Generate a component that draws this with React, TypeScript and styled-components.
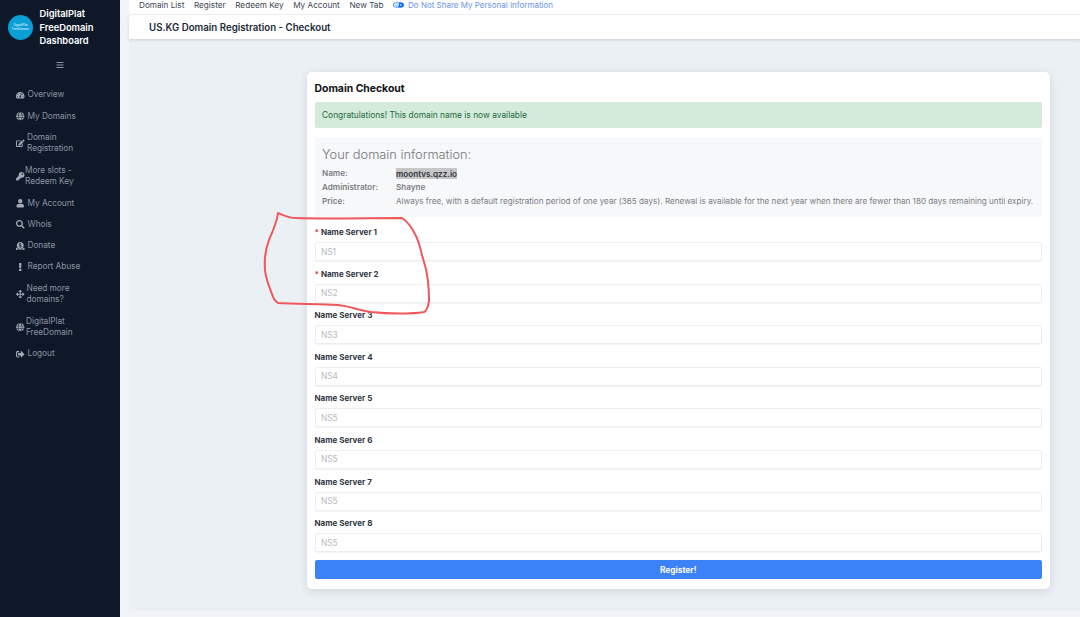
import React from 'react';
import styled, { createGlobalStyle } from 'styled-components';
import {
  FaArrowsAlt,
  FaBars,
  FaDonate,
  FaEdit,
  FaExclamation,
  FaGlobe,
  FaKey,
  FaSearch,
  FaSignOutAlt,
  FaTachometerAlt,
  FaUser,
} from 'react-icons/fa';

const GlobalStyle = createGlobalStyle`
  html, body { margin: 0; padding: 0; height: 617px; overflow: hidden; }
  body { font-family: Inter, "Open Sans", sans-serif; background: #f1f3f6; }
  * { box-sizing: border-box; }
`;

const Page = styled.div`
  position: relative;
  display: flex;
  width: 1080px;
  height: 617px;
  overflow: hidden;
`;

const Sidebar = styled.aside`
  width: 119.5px;
  flex: none;
  background: #0f1828;
  display: flex;
  flex-direction: column;
`;

const Brand = styled.div`
  display: flex;
  align-items: center;
  gap: 6.5px;
  height: 53px;
  padding: 0 0 0 8px;
  margin-top: 1px;
`;

const Logo = styled.div`
  width: 25px;
  height: 25px;
  border-radius: 50%;
  background: #0a9fd6;
  color: #e6f7ff;
  font-size: 3px;
  line-height: 3.6px;
  text-align: center;
  display: flex;
  align-items: center;
  justify-content: center;
  flex: none;
`;

const BrandName = styled.div`
  color: #fff;
  font-size: 9.3px;
  font-weight: 600;
  line-height: 13.6px;
`;

const Toggle = styled.div`
  display: flex;
  justify-content: center;
  height: 16px;
  padding-top: 6.5px;
  color: #8d95a3;
  font-size: 8px;
`;

const Menu = styled.nav`
  display: flex;
  flex-direction: column;
  margin-top: 14.5px;
`;

const MenuItem = styled.a<{ $indent: number }>`
  display: flex;
  align-items: center;
  gap: ${p => p.$indent}px;
  padding: 4.9px 8px 4.9px 16px;
  color: #8a93a3;
  font-size: 8.3px;
  letter-spacing: -0.05px;
  line-height: 11.5px;
  min-height: 21.3px;
  & > svg { flex: none; width: 8.5px; height: 8.5px; color: #a2aab6; }
`;

const Main = styled.div`
  flex: 1;
  min-width: 0;
  padding-left: 9.5px;
  display: flex;
  flex-direction: column;
  height: 611px;
`;

const TopNav = styled.div`
  display: flex;
  align-items: center;
  height: 15px;
  padding: 0 0 5px 10px;
  gap: 9.6px;
  background: #fff;
  font-size: 8.2px;
  color: #3d4654;
  border-bottom: 1px solid #f0f2f5;
`;

const PrivacyLink = styled.span`
  display: flex;
  align-items: center;
  gap: 4px;
  font-size: 8px;
  color: #6b93e6;
`;

const Header = styled.header`
  height: 24px;
  background: #fff;
  border-radius: 4px 0 0 0;
  box-shadow: 0 1px 3px rgba(40, 50, 70, 0.16);
  padding-left: 20px;
  display: flex;
  align-items: center;
  font-size: 9.7px;
  font-weight: 600;
  color: #222a38;
  position: relative;
`;

const Content = styled.main`
  flex: 1;
  background: #ebf0f5;
  padding: 32.5px 30px 0 178px;
`;

const Card = styled.section`
  background: #fff;
  border-radius: 5px;
  box-shadow: 0 2px 8px rgba(40, 50, 70, 0.14);
  padding: 8px 8px 8px 7.5px;
  height: 517.5px;
  display: flex;
  flex-direction: column;
`;

const CardTitle = styled.h2`
  margin: 0;
  height: 22.5px;
  padding-bottom: 4px;
  display: flex;
  align-items: center;
  font-size: 10.4px;
  font-weight: 700;
  color: #0f1216;
`;

const Alert = styled.div`
  height: 26px;
  display: flex;
  align-items: center;
  padding-left: 7.5px;
  background: #d4eadb;
  border-radius: 2px;
  color: #1f6b3d;
  font-size: 8.4px;
`;

const InfoBox = styled.div`
  margin-top: 10px;
  height: 79px;
  background: #f7f8fa;
  border-radius: 2px;
  padding: 8px 7.5px 0;
`;

const InfoTitle = styled.h3`
  margin: 0 0 2px;
  font-size: 12.8px;
  line-height: 18px;
  font-weight: 300;
  color: #6f757d;
`;

const InfoRow = styled.div`
  display: grid;
  grid-template-columns: 74px 1fr;
  height: 14px;
  align-items: center;
  font-size: 8.15px;
  color: #777d85;
`;

const InfoLabel = styled.span`
  font-weight: 600;
`;

const InfoValue = styled.span<{ $strong?: boolean }>`
  font-weight: ${p => (p.$strong ? 600 : 400)};
  white-space: nowrap;
`;

const Selected = styled.mark`
  background: #c6c6c6;
  color: #33383f;
  font-weight: 600;
  padding: 0.5px 0;
`;

const Fields = styled.div`
  margin-top: 9px;
  display: flex;
  flex-direction: column;
`;

const Field = styled.div`
  height: 41.6px;
  display: flex;
  flex-direction: column;
`;

const Label = styled.label`
  height: 12px;
  display: block;
  line-height: 12px;
  font-size: 8px;
  font-weight: 700;
  color: #303744;
`;

const Star = styled.span`
  color: #e0453a;
`;

const Input = styled.input`
  margin-top: 4px;
  height: 19px;
  width: 100%;
  border: 1px solid #eceef1;
  border-radius: 2px;
  box-shadow: 0 1px 1px rgba(40, 50, 70, 0.06);
  padding: 0 5.5px;
  background: #fff;
  font-family: inherit;
  font-size: 8.3px;
  &::placeholder { color: #b4b8bf; }
`;

const Register = styled.button`
  margin-top: 1px;
  height: 19.5px;
  width: 100%;
  border: none;
  border-radius: 2px;
  background: #3b82f6;
  color: #fff;
  font-family: inherit;
  font-size: 8.3px;
  font-weight: 700;
`;

const Scribble = styled.svg`
  position: absolute;
  inset: 0;
  width: 1080px;
  height: 617px;
  pointer-events: none;
`;

const menu = [
  { icon: <FaTachometerAlt />, text: 'Overview', indent: 3 },
  { icon: <FaGlobe />, text: 'My Domains', indent: 3 },
  { icon: <FaEdit />, text: <>Domain<br />Registration</>, indent: 2.5 },
  { icon: <FaKey />, text: <>More slots -<br />Redeem Key</>, indent: 0.5 },
  { icon: <FaUser />, text: 'My Account', indent: 3 },
  { icon: <FaSearch />, text: 'Whois', indent: 3 },
  { icon: <FaDonate />, text: 'Donate', indent: 3 },
  { icon: <FaExclamation />, text: 'Report Abuse', indent: 3 },
  { icon: <FaArrowsAlt />, text: <>Need more<br />domains?</>, indent: 2 },
  { icon: <FaGlobe />, text: <>DigitalPlat<br />FreeDomain</>, indent: 1.5 },
  { icon: <FaSignOutAlt />, text: 'Logout', indent: 3 },
];

const servers = [
  { n: 1, placeholder: 'NS1', required: true },
  { n: 2, placeholder: 'NS2', required: true },
  { n: 3, placeholder: 'NS3' },
  { n: 4, placeholder: 'NS4' },
  { n: 5, placeholder: 'NS5' },
  { n: 6, placeholder: 'NS5' },
  { n: 7, placeholder: 'NS5' },
  { n: 8, placeholder: 'NS5' },
];

export default function App() {
  return (
    <Page>
      <GlobalStyle />
      <Sidebar>
        <Brand>
          <Logo>DigitalPlat<br />FreeDomain</Logo>
          <BrandName>DigitalPlat<br />FreeDomain<br />Dashboard</BrandName>
        </Brand>
        <Toggle><FaBars /></Toggle>
        <Menu>
          {menu.map((m, i) => (
            <MenuItem key={i} $indent={m.indent}>
              {m.icon}
              <span>{m.text}</span>
            </MenuItem>
          ))}
        </Menu>
      </Sidebar>
      <Main>
        <TopNav>
          <span>Domain List</span>
          <span>Register</span>
          <span>Redeem Key</span>
          <span>My Account</span>
          <span>New Tab</span>
          <PrivacyLink>
            <svg width="11" height="6" viewBox="0 0 30 14">
              <rect x="1" y="1" width="28" height="12" rx="6" fill="#fff" stroke="#0066ff" strokeWidth="2" />
              <path d="M17 1h6a6 6 0 0 1 0 12h-9z" fill="#0066ff" />
              <path d="M6 7l2.5 2.5L12 5" fill="none" stroke="#0066ff" strokeWidth="1.6" />
              <path d="M19 4.5l5 5M24 4.5l-5 5" stroke="#fff" strokeWidth="1.6" />
            </svg>
            Do Not Share My Personal Information
          </PrivacyLink>
        </TopNav>
        <Header>US.KG Domain Registration - Checkout</Header>
        <Content>
          <Card>
            <CardTitle>Domain Checkout</CardTitle>
            <Alert>Congratulations! This domain name is now available</Alert>
            <InfoBox>
              <InfoTitle>Your domain information:</InfoTitle>
              <InfoRow>
                <InfoLabel>Name:</InfoLabel>
                <InfoValue><Selected>moontvs.qzz.io</Selected></InfoValue>
              </InfoRow>
              <InfoRow>
                <InfoLabel>Administrator:</InfoLabel>
                <InfoValue $strong>Shayne</InfoValue>
              </InfoRow>
              <InfoRow>
                <InfoLabel>Price:</InfoLabel>
                <InfoValue>Always free, with a default registration period of one year (365 days). Renewal is available for the next year when there are fewer than 180 days remaining until expiry.</InfoValue>
              </InfoRow>
            </InfoBox>
            <Fields>
              {servers.map(s => (
                <Field key={s.n}>
                  <Label>{s.required && <Star>* </Star>}Name Server {s.n}</Label>
                  <Input placeholder={s.placeholder} />
                </Field>
              ))}
            </Fields>
            <Register>Register!</Register>
          </Card>
        </Content>
      </Main>
      <Scribble viewBox="0 0 1080 617">
        <path
          d="M278 213C281 214 288 218 296 218C318 219 370 218 402 218C408 222 412 228 415 234C420 243 421 253 424 262C428 274 429 290 429 301C428 307 427 311 424 312C412 314 388 314 371 312C358 310 349 306 338 305C320 304 296 304 278 303C275 301 273 298 272 294C269 286 266 280 265 270C264 258 266 248 269 240C273 231 277 222 278 213Z"
          fill="none"
          stroke="#f0575a"
          strokeWidth="2"
          strokeLinejoin="round"
        />
      </Scribble>
    </Page>
  );
}
